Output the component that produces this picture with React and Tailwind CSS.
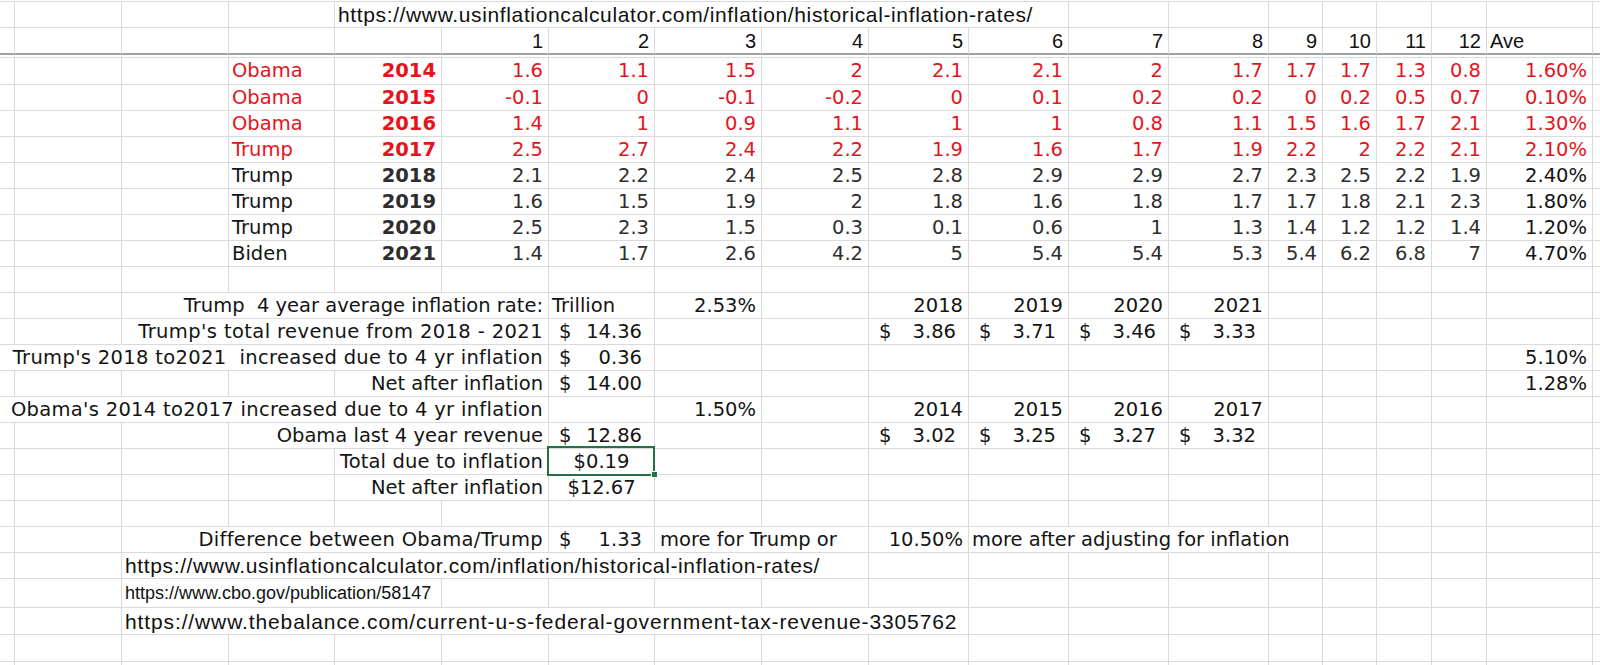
import React from 'react';

const GRID =
  'grid grid-cols-[15px_107px_107px_106px_107px_107px_106px_107px_107px_100px_100px_100px_100px_54px_54px_55px_55px_106px_1fr]';
const SPAN = {
  1: 'col-span-1',
  2: 'col-span-2',
  3: 'col-span-3',
  4: 'col-span-4',
  5: 'col-span-5',
  6: 'col-span-6',
  7: 'col-span-7',
  8: 'col-span-8',
};
const LBL = "font-['DejaVu_Sans',sans-serif] text-[19.5px] text-[#141414]";
const NUM = "font-['DejaVu_Sans',sans-serif] text-[19.5px] text-[#2e2e2e]";
const RED = "font-['DejaVu_Sans',sans-serif] text-[19.5px] text-[#e5141c]";
const URLF = "font-['Liberation_Sans',Arial,sans-serif] text-[#111]";
const HDR = "font-['Liberation_Sans',Arial,sans-serif] text-[20px] text-[#111]";
const ALIGN = {
  r: 'justify-end pr-[5px]',
  l: 'justify-start pl-[3px]',
  c: 'justify-center',
  a: 'justify-between pl-[10px] pr-[12px]',
};
const BOTTOM = {
  n: 'border-b border-b-[#dadada]',
  t: 'border-b border-b-[#dadada] border-t border-t-[#dadada]',
  f: 'border-b-2 border-b-[#a2a2a2]',
};

function Cell({ span = 1, align = 'r', cls = '', v, bottom, last, sel }) {
  return (
    <div
      className={`${SPAN[span]} ${last ? '' : 'border-r border-r-[#dadada]'} ${BOTTOM[bottom]} relative flex items-center min-w-0 whitespace-nowrap leading-none ${
        sel ? '' : 'overflow-hidden'
      } ${v != null ? ALIGN[align] : ''} ${cls}`}
    >
      {v}
      {sel && (
        <>
          <div className="absolute z-10 -top-[3px] -left-[2px] -right-[1px] -bottom-[2px] border-2 border-[#217346]" />
          <div className="absolute z-20 -bottom-[4px] -right-[4px] w-[7px] h-[7px] bg-[#217346] border border-white" />
        </>
      )}
    </div>
  );
}

function Row({ h, cells = [], bottom = 'n' }) {
  const out = [];
  const sorted = [...cells].sort((a, b) => a.c - b.c);
  let col = 0;
  let i = 0;
  while (col < 19) {
    const cell = sorted[i];
    if (cell && cell.c === col) {
      const span = cell.span || 1;
      out.push(<Cell key={col} {...cell} bottom={bottom} last={col + span >= 19} />);
      col += span;
      i++;
    } else {
      out.push(<Cell key={col} bottom={bottom} last={col === 18} />);
      col++;
    }
  }
  return <div className={`${GRID} ${h}`}>{out}</div>;
}

const acct = (n) => (
  <>
    <span>$</span>
    <span>{n}</span>
  </>
);

const DATA = [
  ['Obama', '2014', ['1.6', '1.1', '1.5', '2', '2.1', '2.1', '2', '1.7', '1.7', '1.7', '1.3', '0.8'], '1.60%', true],
  ['Obama', '2015', ['-0.1', '0', '-0.1', '-0.2', '0', '0.1', '0.2', '0.2', '0', '0.2', '0.5', '0.7'], '0.10%', true],
  ['Obama', '2016', ['1.4', '1', '0.9', '1.1', '1', '1', '0.8', '1.1', '1.5', '1.6', '1.7', '2.1'], '1.30%', true],
  ['Trump', '2017', ['2.5', '2.7', '2.4', '2.2', '1.9', '1.6', '1.7', '1.9', '2.2', '2', '2.2', '2.1'], '2.10%', true],
  ['Trump', '2018', ['2.1', '2.2', '2.4', '2.5', '2.8', '2.9', '2.9', '2.7', '2.3', '2.5', '2.2', '1.9'], '2.40%', false],
  ['Trump', '2019', ['1.6', '1.5', '1.9', '2', '1.8', '1.6', '1.8', '1.7', '1.7', '1.8', '2.1', '2.3'], '1.80%', false],
  ['Trump', '2020', ['2.5', '2.3', '1.5', '0.3', '0.1', '0.6', '1', '1.3', '1.4', '1.2', '1.2', '1.4'], '1.20%', false],
  ['Biden', '2021', ['1.4', '1.7', '2.6', '4.2', '5', '5.4', '5.4', '5.3', '5.4', '6.2', '6.8', '7'], '4.70%', false],
];

function dataCells([name, year, vals, avg, red]) {
  return [
    { c: 3, align: 'l', v: name, cls: red ? RED : LBL },
    { c: 4, v: year, cls: `${red ? RED : NUM} font-bold` },
    ...vals.map((v, i) => ({ c: 5 + i, v, cls: red ? RED : NUM })),
    { c: 17, v: avg, cls: red ? RED : LBL },
  ];
}

export default function App() {
  return (
    <div className="w-[1600px] h-[665px] overflow-hidden bg-white">
      <div className="h-px" />
      <Row
        h="h-[27px]"
        bottom="t"
        cells={[
          {
            c: 4,
            span: 7,
            align: 'l',
            cls: `${URLF} text-[21px] tracking-[0.63px] pl-[3px]`,
            v: 'https://www.usinflationcalculator.com/inflation/historical-inflation-rates/',
          },
        ]}
      />
      <Row
        h="h-[27px]"
        bottom="f"
        cells={[
          ...['1', '2', '3', '4', '5', '6', '7', '8', '9', '10', '11', '12'].map((v, i) => ({ c: 5 + i, v, cls: HDR })),
          { c: 17, align: 'l', v: 'Ave', cls: HDR },
        ]}
      />
      <Row h="h-[3px]" />
      {DATA.map((d, i) => (
        <Row key={d[1]} h={i === 0 ? 'h-[27px]' : 'h-[26px]'} cells={dataCells(d)} />
      ))}
      <Row h="h-[26px]" />
      <Row
        h="h-[26px]"
        cells={[
          { c: 2, span: 4, v: 'Trump\u00a0\u00a04 year average inflation rate:', cls: LBL },
          { c: 6, align: 'l', v: 'Trillion', cls: LBL },
          { c: 7, v: '2.53%', cls: LBL },
          { c: 9, v: '2018', cls: LBL },
          { c: 10, v: '2019', cls: LBL },
          { c: 11, v: '2020', cls: LBL },
          { c: 12, v: '2021', cls: LBL },
        ]}
      />
      <Row
        h="h-[26px]"
        cells={[
          { c: 2, span: 4, v: "Trump's total revenue from 2018 - 2021", cls: `${LBL} tracking-[0.4px]` },
          { c: 6, align: 'a', v: acct('14.36'), cls: LBL },
          { c: 9, align: 'a', v: acct('3.86'), cls: LBL },
          { c: 10, align: 'a', v: acct('3.71'), cls: LBL },
          { c: 11, align: 'a', v: acct('3.46'), cls: LBL },
          { c: 12, align: 'a', v: acct('3.33'), cls: LBL },
        ]}
      />
      <Row
        h="h-[26px]"
        cells={[
          {
            c: 0,
            span: 6,
            v: "Trump's 2018 to2021\u00a0\u00a0increased due to 4 yr inflation",
            cls: `${LBL} tracking-[0.33px]`,
          },
          { c: 6, align: 'a', v: acct('0.36'), cls: LBL },
          { c: 17, v: '5.10%', cls: LBL },
        ]}
      />
      <Row
        h="h-[26px]"
        cells={[
          { c: 4, span: 2, v: 'Net after inflation', cls: LBL },
          { c: 6, align: 'a', v: acct('14.00'), cls: LBL },
          { c: 17, v: '1.28%', cls: LBL },
        ]}
      />
      <Row
        h="h-[26px]"
        cells={[
          { c: 0, span: 6, v: "Obama's 2014 to2017 increased due to 4 yr inflation", cls: `${LBL} tracking-[0.3px]` },
          { c: 7, v: '1.50%', cls: LBL },
          { c: 9, v: '2014', cls: LBL },
          { c: 10, v: '2015', cls: LBL },
          { c: 11, v: '2016', cls: LBL },
          { c: 12, v: '2017', cls: LBL },
        ]}
      />
      <Row
        h="h-[26px]"
        cells={[
          { c: 3, span: 3, v: 'Obama last 4 year revenue', cls: LBL },
          { c: 6, align: 'a', v: acct('12.86'), cls: LBL },
          { c: 9, align: 'a', v: acct('3.02'), cls: LBL },
          { c: 10, align: 'a', v: acct('3.25'), cls: LBL },
          { c: 11, align: 'a', v: acct('3.27'), cls: LBL },
          { c: 12, align: 'a', v: acct('3.32'), cls: LBL },
        ]}
      />
      <Row
        h="h-[26px]"
        cells={[
          { c: 4, span: 2, v: 'Total due to inflation', cls: `${LBL} tracking-[0.15px]` },
          { c: 6, align: 'c', v: '$0.19', cls: LBL, sel: true },
        ]}
      />
      <Row
        h="h-[26px]"
        cells={[
          { c: 4, span: 2, v: 'Net after inflation', cls: LBL },
          { c: 6, align: 'c', v: '$12.67', cls: LBL },
        ]}
      />
      <Row h="h-[26px]" />
      <Row
        h="h-[26px]"
        cells={[
          { c: 2, span: 4, v: 'Difference between Obama/Trump', cls: `${LBL} tracking-[0.3px]` },
          { c: 6, align: 'a', v: acct('1.33'), cls: LBL },
          { c: 7, span: 2, align: 'l', v: 'more for Trump or', cls: `${LBL} pl-[5px]` },
          { c: 9, v: '10.50%', cls: LBL },
          { c: 10, span: 4, align: 'l', v: 'more after adjusting for inflation', cls: LBL },
        ]}
      />
      <Row
        h="h-[26px]"
        cells={[
          {
            c: 2,
            span: 7,
            align: 'l',
            v: 'https://www.usinflationcalculator.com/inflation/historical-inflation-rates/',
            cls: `${URLF} text-[21px] tracking-[0.63px]`,
          },
        ]}
      />
      <Row
        h="h-[29px]"
        cells={[
          {
            c: 2,
            span: 3,
            align: 'l',
            v: 'https://www.cbo.gov/publication/58147',
            cls: `${URLF} text-[18px]`,
          },
        ]}
      />
      <Row
        h="h-[27px]"
        cells={[
          {
            c: 2,
            span: 8,
            align: 'l',
            v: 'https://www.thebalance.com/current-u-s-federal-government-tax-revenue-3305762',
            cls: `${URLF} text-[21px] tracking-[0.88px]`,
          },
        ]}
      />
      <Row h="h-[27px]" />
      <Row h="h-[26px]" />
    </div>
  );
}
